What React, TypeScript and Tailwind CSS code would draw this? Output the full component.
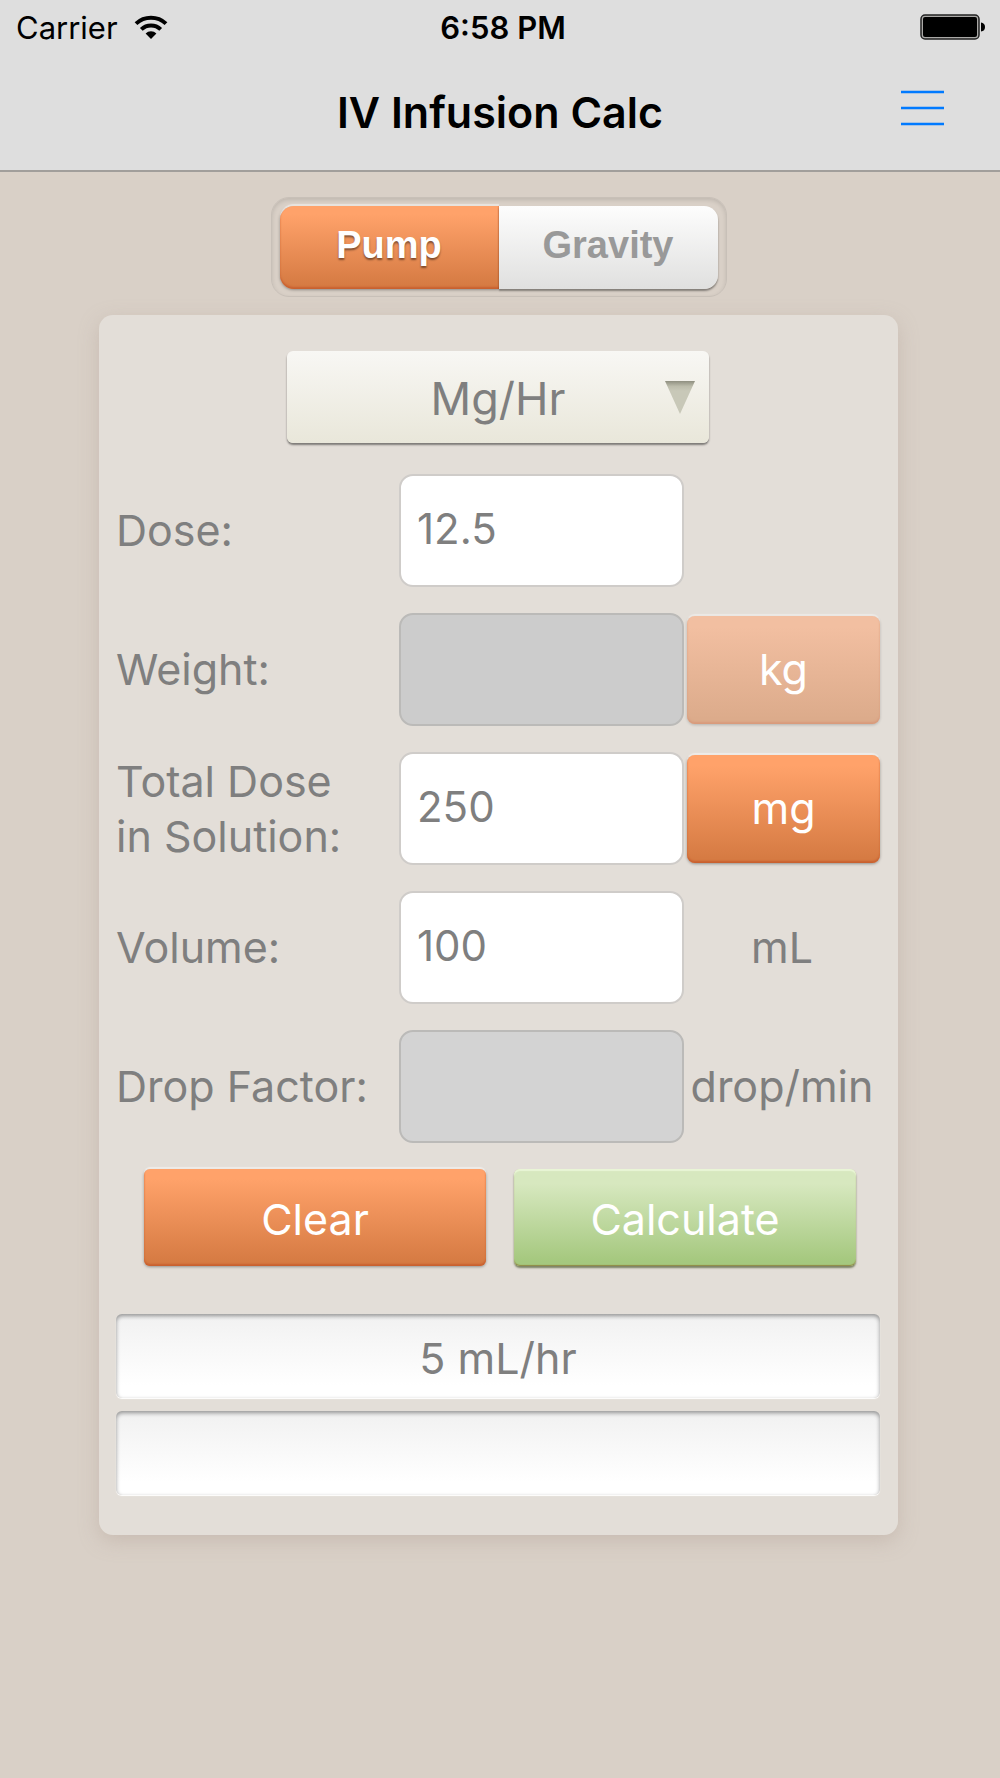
import React, { useState } from "react";
import clsx from "clsx";

const orange =
  "bg-linear-to-b from-[#ffa26a] from-10% to-[#d67b43] to-95% text-white shadow-[0_-2px_1px_#ffffff80,0_1px_3px_#00000059,inset_0_-2px_2px_#c9602f]";

const inputStyle =
  "h-[113px] w-full min-w-0 rounded-[14px] border-2 pb-1 pl-4 text-[42px] outline-none";

const modes = ["Pump", "Gravity"];

const units = ["Mg/Hr", "Mcg/Min", "Mcg/Kg/Min", "Units/Hr"];

const WifiIcon = () => (
  <svg width="34" height="24" viewBox="0 0 34 24" aria-hidden="true">
    <g fill="none" stroke="#000" strokeWidth="4">
      <path d="M2 8.6 A22 22 0 0 1 32 8.6" />
      <path d="M7.3 14.4 A14 14 0 0 1 26.7 14.4" />
    </g>
    <path d="M11.6 18.6 A7.6 7.6 0 0 1 22.4 18.6 L17 24 Z" fill="#000" />
  </svg>
);

const BatteryIcon = () => (
  <svg width="66" height="26" viewBox="0 0 66 26" aria-hidden="true">
    <rect
      x="1"
      y="1"
      width="58"
      height="24"
      rx="4"
      fill="#aaa9a7"
      stroke="#222"
      strokeWidth="1.5"
    />
    <rect x="3" y="3" width="54" height="20" rx="2" fill="#000" />
    <path d="M61 8.5 Q65 9 65 13 Q65 17 61 17.5 Z" fill="#000" />
  </svg>
);

const MenuIcon = () => (
  <svg width="43" height="36" viewBox="0 0 43 36" aria-hidden="true">
    <path
      d="M0 2H43 M0 18H43 M0 34H43"
      fill="none"
      stroke="#007aff"
      strokeWidth="2.6"
    />
  </svg>
);

const Row = ({
  id,
  label,
  children,
}: {
  id: string;
  label: React.ReactNode;
  children: React.ReactNode;
}) => (
  <div className="grid grid-cols-[283fr_285fr_196fr] items-center">
    <label htmlFor={id} className="leading-[55px] whitespace-nowrap">
      {label}
    </label>
    {children}
  </div>
);

const Header = () => (
  <header className="border-b-2 border-[#a19e9b] bg-[#dedede] text-black">
    <div className="grid h-[54px] grid-cols-3 items-center pr-[14px] pl-4 text-[31px]">
      <div className="flex items-center gap-4">
        <span className="pt-0.5">Carrier</span>
        <WifiIcon />
      </div>
      <span className="pt-0.5 pl-1 text-center font-semibold">6:58 PM</span>
      <div className="flex justify-end">
        <BatteryIcon />
      </div>
    </div>
    <div className="grid h-[116px] grid-cols-[1fr_auto_1fr] pr-14 pl-14">
      <h1 className="col-start-2 pt-7 text-[43px] leading-[60px] font-semibold">
        IV Infusion Calc
      </h1>
      <button type="button" aria-label="Menu" className="mt-9 self-start justify-self-end">
        <MenuIcon />
      </button>
    </div>
  </header>
);

export default function App() {
  const [mode, setMode] = useState("Pump");
  const [unit, setUnit] = useState("Mg/Hr");
  const [dose, setDose] = useState("12.5");
  const [total, setTotal] = useState("250");
  const [volume, setVolume] = useState("100");
  const [result, setResult] = useState("5 mL/hr");

  const clear = () => {
    setDose("");
    setTotal("");
    setVolume("");
    setResult("");
  };

  const calculate = () => {
    const rate = (Number(dose) * Number(volume)) / Number(total);
    setResult(Number.isFinite(rate) ? `${Number(rate.toFixed(2))} mL/hr` : "");
  };

  return (
    <div className="min-h-screen bg-[#d9d0c7] font-['Inter',sans-serif] text-[#7f7f7f]">
      <Header />
      <main className="pt-[25px] pr-[102px] pb-16 pl-[99px]">
        <div className="mx-auto flex w-[456px] rounded-[18px] border border-[#c8c0b8] px-2 pt-2 pb-[7px] shadow-[inset_0_2px_4px_#0000001f]">
          {modes.map((m) => (
            <button
              key={m}
              type="button"
              aria-pressed={mode === m}
              onClick={() => setMode(m)}
              className={clsx(
                "h-[83px] flex-1 pb-1 font-['Liberation_Sans',sans-serif] text-[38px] font-bold first:rounded-l-[14px] last:rounded-r-[14px]",
                mode === m
                  ? `${orange} text-shadow-[0_2px_2px_#00000073]`
                  : "bg-linear-to-b from-[#fdfdfd] to-[#e0e0df] text-[#999] shadow-[0_2px_2px_#00000066]"
              )}
            >
              {m}
            </button>
          ))}
        </div>

        <form
          className="mt-[18px] rounded-[14px] bg-[#e3ded8] pt-9 pr-[18px] pb-10 pl-[17px] text-[43px] shadow-[0_6px_20px_#a8968a59]"
          onSubmit={(e) => {
            e.preventDefault();
            calculate();
          }}
        >
          <div className="relative mx-auto w-[422px]">
            <select
              aria-label="Dose unit"
              value={unit}
              onChange={(e) => setUnit(e.target.value)}
              className="h-[92px] w-full appearance-none rounded-md bg-linear-to-b from-[#f8f7f4] to-[#e9e7da] pt-1 text-center text-[45px] shadow-[0_2px_2px_#00000073] outline-none"
            >
              {units.map((u) => (
                <option key={u}>{u}</option>
              ))}
            </select>
            <svg
              className="pointer-events-none absolute top-[30px] right-[14px]"
              width="30"
              height="34"
              viewBox="0 0 30 34"
              aria-hidden="true"
            >
              <defs>
                <linearGradient id="arrow" x1="0" y1="0" x2="0" y2="1">
                  <stop offset="0" stopColor="#8f8f80" />
                  <stop offset="0.16" stopColor="#bcbcab" />
                  <stop offset="0.3" stopColor="#c8c8b8" />
                </linearGradient>
              </defs>
              <path d="M0 0 H30 L15 33 Z" fill="url(#arrow)" />
            </svg>
          </div>

          <div className="mt-[31px] flex flex-col gap-[26px]">
            <Row id="dose" label="Dose:">
              <input
                id="dose"
                className={`${inputStyle} border-[#cfccc9] bg-white`}
                value={dose}
                onChange={(e) => setDose(e.target.value)}
              />
            </Row>
            <Row id="weight" label="Weight:">
              <input
                id="weight"
                disabled
                className={`${inputStyle} border-[#bbbab8] bg-[#ccc]`}
              />
              <button
                type="button"
                disabled
                className="ml-[3px] h-[108px] rounded-lg bg-linear-to-b from-[#f2bfa1] from-10% to-[#dcab8b] to-95% text-white shadow-[0_-2px_1px_#ffffff66,0_1px_3px_#00000033,inset_0_-2px_2px_#d89a7c]"
              >
                kg
              </button>
            </Row>
            <Row
              id="total"
              label={
                <>
                  Total Dose
                  <br />
                  in Solution:
                </>
              }
            >
              <input
                id="total"
                className={`${inputStyle} border-[#cfccc9] bg-white`}
                value={total}
                onChange={(e) => setTotal(e.target.value)}
              />
              <button type="button" className={`${orange} ml-[3px] h-[108px] rounded-lg`}>
                mg
              </button>
            </Row>
            <Row id="volume" label="Volume:">
              <input
                id="volume"
                className={`${inputStyle} border-[#cfccc9] bg-white`}
                value={volume}
                onChange={(e) => setVolume(e.target.value)}
              />
              <span className="text-center">mL</span>
            </Row>
            <Row id="drop" label="Drop Factor:">
              <input
                id="drop"
                disabled
                className={`${inputStyle} border-[#bbbab8] bg-[#d3d3d3]`}
              />
              <span className="text-center">drop/min</span>
            </Row>
          </div>

          <div className="mt-[26px] grid grid-cols-2 gap-7 pr-6 pl-7">
            <button
              type="button"
              onClick={clear}
              className={`${orange} h-[97px] rounded-md pt-1`}
            >
              Clear
            </button>
            <button
              type="submit"
              className="h-[97px] rounded-md bg-linear-to-b from-[#d7e8bf] from-15% to-[#a5c87e] to-95% pt-1 text-white shadow-[0_2px_2px_#4f5a2fb3,inset_0_2px_1px_#e9f5d6,inset_0_-1px_1px_#8f8a45]"
            >
              Calculate
            </button>
          </div>

          <div className="mt-12 flex flex-col gap-[13px]">
            {[result, ""].map((text, i) => (
              <output
                key={i}
                className="flex h-[84px] items-center justify-center rounded-md bg-linear-to-b from-[#f1f1f1] to-white to-85% pt-1 shadow-[inset_0_2px_4px_#00000066,0_1px_1px_#fff]"
              >
                {text}
              </output>
            ))}
          </div>
        </form>
      </main>
    </div>
  );
}
